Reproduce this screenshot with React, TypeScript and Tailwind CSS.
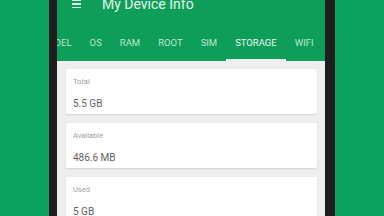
import React from "react";

const tabs = ["MODEL", "OS", "RAM", "ROOT", "SIM", "STORAGE", "WIFI", "BATTERY"];

const cards = [
  { label: "Total", value: "5.5 GB" },
  { label: "Available", value: "486.6 MB" },
  { label: "Used", value: "5 GB" },
];

export default function App() {
  return (
    <div
      className="w-[384px] h-[216px] overflow-hidden bg-[#0ba35f] flex pl-[49px]"
      style={{ fontFamily: "Roboto, 'Noto Sans', sans-serif" }}
    >
      <div className="w-[286px] h-full bg-[#1d1d1d] pl-[8px] pr-[10px] flex">
        <div className="w-[268px] h-full flex flex-col overflow-hidden">
          <div className="-mt-[16px] bg-[#0f9e5a] flex flex-col">
            <div className="h-[40px] flex items-center pl-[15px] gap-[21px]">
              <div className="flex flex-col gap-[2px] w-[9px]">
                <div className="h-[1.5px] bg-[#d9f1e4]" />
                <div className="h-[1.5px] bg-[#d9f1e4]" />
                <div className="h-[1.5px] bg-[#d9f1e4]" />
              </div>
              <span className="text-[14px] text-[#e6f6ee] font-normal leading-none">My Device Info</span>
            </div>
            <div className="h-[37px] overflow-hidden">
              <div className="flex h-full -ml-[26px]">
                {tabs.map((t) => (
                  <div key={t} className="relative h-full flex items-center px-[9px] shrink-0">
                    <span
                      className={
                        t === "STORAGE"
                          ? "text-[9.5px] text-[#e8f7ef] leading-none"
                          : "text-[9.5px] text-[#b9e6cf] leading-none"
                      }
                    >
                      {t}
                    </span>
                    {t === "STORAGE" && (
                      <div className="absolute left-0 right-0 bottom-0 h-[2px] bg-[#e6f5ec]" />
                    )}
                  </div>
                ))}
              </div>
            </div>
          </div>
          <div className="flex-1 bg-[#eeeeee] pl-[9px] pr-[8px] pt-[8px] flex flex-col gap-[9px]">
            {cards.map((c) => (
              <div
                key={c.label}
                className="h-[45px] shrink-0 bg-white rounded-[2px] shadow-[0_1px_2px_rgba(0,0,0,0.12)] flex flex-col pl-[7px] pt-[8px]"
              >
                <span className="text-[7.5px] leading-[10px] text-[#a0a0a0]">{c.label}</span>
                <span className="mt-[11px] text-[10px] leading-[12px] text-[#5f5f5f]">{c.value}</span>
              </div>
            ))}
          </div>
        </div>
      </div>
    </div>
  );
}
